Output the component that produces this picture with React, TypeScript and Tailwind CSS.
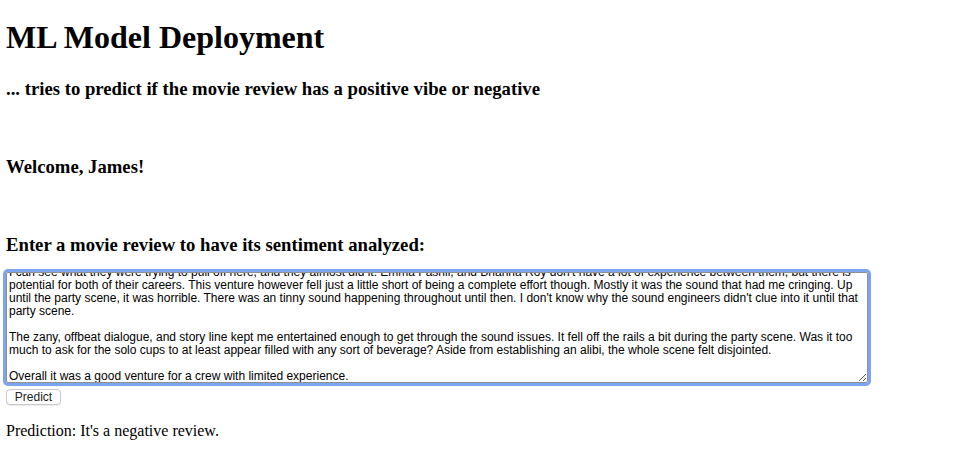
import { useEffect, useRef } from "react";

// review text, wrapped by hand so the lines break where the original does
const review = [
  "I can see what they were trying to pull off here, and they almost did it. Emma Fasnli, and Brianna Roy don't have a lot of experience between them, but there is",
  "potential for both of their careers. This venture however fell just a little short of being a complete effort though. Mostly it was the sound that had me cringing. Up",
  "until the party scene, it was horrible. There was an tinny sound happening throughout until then. I don't know why the sound engineers didn't clue into it until that",
  "party scene.",
  "",
  "The zany, offbeat dialogue, and story line kept me entertained enough to get through the sound issues. It fell off the rails a bit during the party scene. Was it too",
  "much to ask for the solo cups to at least appear filled with any sort of beverage? Aside from establishing an alibi, the whole scene felt disjointed.",
  "",
  "Overall it was a good venture for a crew with limited experience.",
].join("\n");

export default function App() {
  const areaRef = useRef<HTMLTextAreaElement>(null);

  useEffect(() => {
    const el = areaRef.current;
    if (!el) return;
    el.focus();
    el.setSelectionRange(review.length, review.length);
    el.scrollTop = 9;
  }, []);

  return (
    <div className="min-h-screen bg-white px-[6px] font-['Liberation_Serif',serif] text-black">
      <h1 className="pt-[19px] text-[32px] font-bold leading-[37px]">ML Model Deployment</h1>
      <h3 className="mt-[22px] text-[18.72px] font-bold leading-[21.5px]">
        ... tries to predict if the movie review has a positive vibe or negative
      </h3>
      <h3 className="mt-[56px] text-[18.72px] font-bold leading-[21.5px]">Welcome, James!</h3>
      <h3 className="mt-[57px] text-[18.72px] font-bold leading-[21.5px]">
        Enter a movie review to have its sentiment analyzed:
      </h3>

      <form className="mt-[16px] flex flex-col items-start" onSubmit={(e) => e.preventDefault()}>
        <textarea
          ref={areaRef}
          wrap="off"
          defaultValue={review}
          className="h-[111px] w-[862px] overflow-hidden rounded-[2px] border border-[#8f8f8f] px-[2px] py-[2px] font-['Liberation_Sans',sans-serif] text-[12px] leading-[13px] text-black outline-[3px] outline-[#7ba5ef] outline-solid"
        />
        <button
          type="submit"
          className="mt-[6px] h-[16px] w-[55px] rounded-[4px] border border-[#c9c9c9] bg-white font-['Liberation_Sans',sans-serif] text-[12px] leading-[14px] text-[#222] shadow-[0_1px_1px_rgba(0,0,0,0.08)]"
        >
          Predict
        </button>
      </form>

      <p className="mt-[17px] text-[16px] leading-[18px]">Prediction: It's a negative review.</p>
    </div>
  );
}
